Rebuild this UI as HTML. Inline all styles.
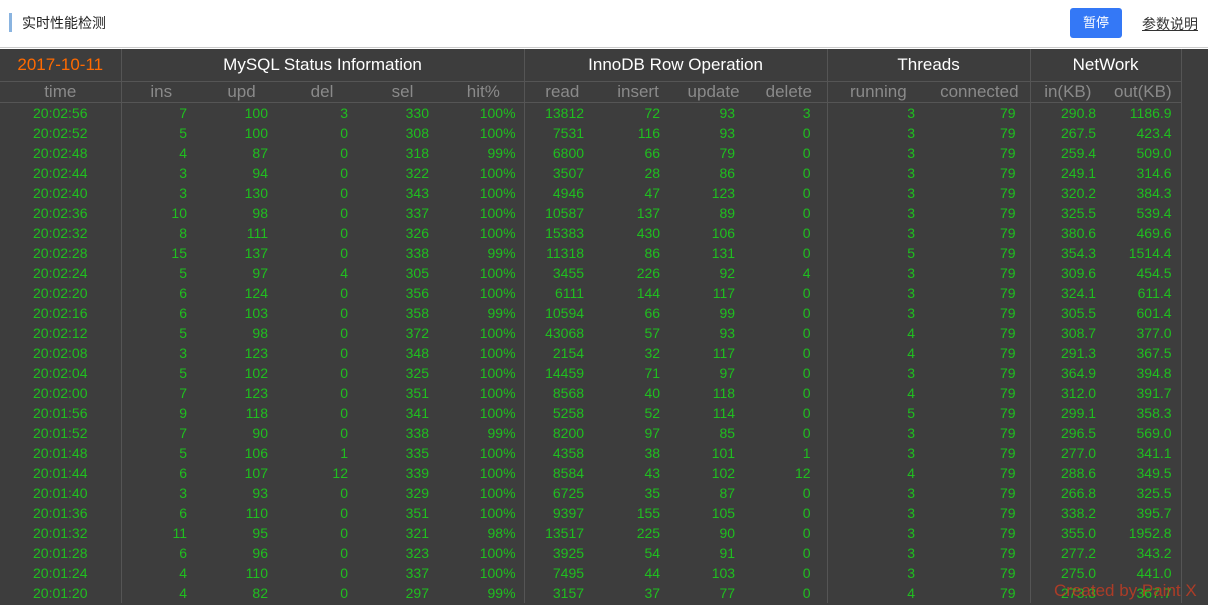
<!DOCTYPE html>
<html><head><meta charset="utf-8"><style>
*{margin:0;padding:0;box-sizing:border-box}
body{width:1208px;height:605px;overflow:hidden;background:#fff;font-family:"Liberation Sans","Noto Sans CJK SC",sans-serif;position:relative}
.top{height:48px;position:relative;border-bottom:1px solid #ccc}
.bar{position:absolute;left:9px;top:13px;width:3px;height:19px;background:#8ab4e0}
.title{position:absolute;left:22px;top:13px;font-size:14px;color:#222}
.btn{position:absolute;left:1070px;top:8px;width:52px;height:30px;background:#3478f6;border-radius:3px;color:#fff;font-size:13px;text-align:center;line-height:30px}
.lnk{position:absolute;left:1142px;top:14px;font-size:14px;color:#333;text-decoration:underline}
.wrap{position:absolute;left:0;top:49px;width:1208px;height:556px;background:#3d3d3d}
table{border-collapse:collapse;table-layout:fixed;width:1181px}
td,th{font-weight:normal;white-space:nowrap;overflow:hidden}
.h1 th{height:32px;font-size:17px;color:#fff;border-right:1px solid #555;border-bottom:1px solid #555}
.h2 th{height:21px;font-size:17px;color:#8a8a8a;border-bottom:1px solid #555;line-height:20px}
.h2 th.e,td.e{border-right:1px solid #555}
td{height:20px;font-size:14px;color:#1fbf1f;text-align:right;padding-right:14px;line-height:20px}
td.t{text-align:center;padding-right:0}
.ib td:nth-child(6){padding-right:8px}
.ib td:nth-child(n+7):nth-child(-n+10){padding-right:16px}
.ib td:nth-child(13),.ib td:nth-child(14){padding-right:9px}
.wm{position:absolute;left:1054px;top:581px;font-size:17px;color:rgba(220,60,30,.7)}
</style></head><body>
<div class="top"><div class="bar"></div><div class="title">实时性能检测</div><div class="btn">暂停</div><div class="lnk">参数说明</div></div>
<div class="wrap">
<table class="ib">
<colgroup><col style="width:121px"><col style="width:80px"><col style="width:81px"><col style="width:80px"><col style="width:81px"><col style="width:81px"><col style="width:76px"><col style="width:76px"><col style="width:75px"><col style="width:76px"><col style="width:102px"><col style="width:101px"><col style="width:75px"><col style="width:76px"></colgroup>
<tr class="h1"><th style="color:#ff6a00">2017-10-11</th><th colspan="5">MySQL Status Information</th><th colspan="4">InnoDB Row Operation</th><th colspan="2">Threads</th><th colspan="2">NetWork</th></tr>
<tr class="h2"><th class="e">time</th><th>ins</th><th>upd</th><th>del</th><th>sel</th><th class="e">hit%</th><th>read</th><th>insert</th><th>update</th><th class="e">delete</th><th>running</th><th class="e">connected</th><th>in(KB)</th><th class="e">out(KB)</th></tr>
<tr><td class="t e">20:02:56</td><td>7</td><td>100</td><td>3</td><td>330</td><td class="e">100%</td><td>13812</td><td>72</td><td>93</td><td class="e">3</td><td>3</td><td class="e">79</td><td>290.8</td><td class="e">1186.9</td></tr>
<tr><td class="t e">20:02:52</td><td>5</td><td>100</td><td>0</td><td>308</td><td class="e">100%</td><td>7531</td><td>116</td><td>93</td><td class="e">0</td><td>3</td><td class="e">79</td><td>267.5</td><td class="e">423.4</td></tr>
<tr><td class="t e">20:02:48</td><td>4</td><td>87</td><td>0</td><td>318</td><td class="e">99%</td><td>6800</td><td>66</td><td>79</td><td class="e">0</td><td>3</td><td class="e">79</td><td>259.4</td><td class="e">509.0</td></tr>
<tr><td class="t e">20:02:44</td><td>3</td><td>94</td><td>0</td><td>322</td><td class="e">100%</td><td>3507</td><td>28</td><td>86</td><td class="e">0</td><td>3</td><td class="e">79</td><td>249.1</td><td class="e">314.6</td></tr>
<tr><td class="t e">20:02:40</td><td>3</td><td>130</td><td>0</td><td>343</td><td class="e">100%</td><td>4946</td><td>47</td><td>123</td><td class="e">0</td><td>3</td><td class="e">79</td><td>320.2</td><td class="e">384.3</td></tr>
<tr><td class="t e">20:02:36</td><td>10</td><td>98</td><td>0</td><td>337</td><td class="e">100%</td><td>10587</td><td>137</td><td>89</td><td class="e">0</td><td>3</td><td class="e">79</td><td>325.5</td><td class="e">539.4</td></tr>
<tr><td class="t e">20:02:32</td><td>8</td><td>111</td><td>0</td><td>326</td><td class="e">100%</td><td>15383</td><td>430</td><td>106</td><td class="e">0</td><td>3</td><td class="e">79</td><td>380.6</td><td class="e">469.6</td></tr>
<tr><td class="t e">20:02:28</td><td>15</td><td>137</td><td>0</td><td>338</td><td class="e">99%</td><td>11318</td><td>86</td><td>131</td><td class="e">0</td><td>5</td><td class="e">79</td><td>354.3</td><td class="e">1514.4</td></tr>
<tr><td class="t e">20:02:24</td><td>5</td><td>97</td><td>4</td><td>305</td><td class="e">100%</td><td>3455</td><td>226</td><td>92</td><td class="e">4</td><td>3</td><td class="e">79</td><td>309.6</td><td class="e">454.5</td></tr>
<tr><td class="t e">20:02:20</td><td>6</td><td>124</td><td>0</td><td>356</td><td class="e">100%</td><td>6111</td><td>144</td><td>117</td><td class="e">0</td><td>3</td><td class="e">79</td><td>324.1</td><td class="e">611.4</td></tr>
<tr><td class="t e">20:02:16</td><td>6</td><td>103</td><td>0</td><td>358</td><td class="e">99%</td><td>10594</td><td>66</td><td>99</td><td class="e">0</td><td>3</td><td class="e">79</td><td>305.5</td><td class="e">601.4</td></tr>
<tr><td class="t e">20:02:12</td><td>5</td><td>98</td><td>0</td><td>372</td><td class="e">100%</td><td>43068</td><td>57</td><td>93</td><td class="e">0</td><td>4</td><td class="e">79</td><td>308.7</td><td class="e">377.0</td></tr>
<tr><td class="t e">20:02:08</td><td>3</td><td>123</td><td>0</td><td>348</td><td class="e">100%</td><td>2154</td><td>32</td><td>117</td><td class="e">0</td><td>4</td><td class="e">79</td><td>291.3</td><td class="e">367.5</td></tr>
<tr><td class="t e">20:02:04</td><td>5</td><td>102</td><td>0</td><td>325</td><td class="e">100%</td><td>14459</td><td>71</td><td>97</td><td class="e">0</td><td>3</td><td class="e">79</td><td>364.9</td><td class="e">394.8</td></tr>
<tr><td class="t e">20:02:00</td><td>7</td><td>123</td><td>0</td><td>351</td><td class="e">100%</td><td>8568</td><td>40</td><td>118</td><td class="e">0</td><td>4</td><td class="e">79</td><td>312.0</td><td class="e">391.7</td></tr>
<tr><td class="t e">20:01:56</td><td>9</td><td>118</td><td>0</td><td>341</td><td class="e">100%</td><td>5258</td><td>52</td><td>114</td><td class="e">0</td><td>5</td><td class="e">79</td><td>299.1</td><td class="e">358.3</td></tr>
<tr><td class="t e">20:01:52</td><td>7</td><td>90</td><td>0</td><td>338</td><td class="e">99%</td><td>8200</td><td>97</td><td>85</td><td class="e">0</td><td>3</td><td class="e">79</td><td>296.5</td><td class="e">569.0</td></tr>
<tr><td class="t e">20:01:48</td><td>5</td><td>106</td><td>1</td><td>335</td><td class="e">100%</td><td>4358</td><td>38</td><td>101</td><td class="e">1</td><td>3</td><td class="e">79</td><td>277.0</td><td class="e">341.1</td></tr>
<tr><td class="t e">20:01:44</td><td>6</td><td>107</td><td>12</td><td>339</td><td class="e">100%</td><td>8584</td><td>43</td><td>102</td><td class="e">12</td><td>4</td><td class="e">79</td><td>288.6</td><td class="e">349.5</td></tr>
<tr><td class="t e">20:01:40</td><td>3</td><td>93</td><td>0</td><td>329</td><td class="e">100%</td><td>6725</td><td>35</td><td>87</td><td class="e">0</td><td>3</td><td class="e">79</td><td>266.8</td><td class="e">325.5</td></tr>
<tr><td class="t e">20:01:36</td><td>6</td><td>110</td><td>0</td><td>351</td><td class="e">100%</td><td>9397</td><td>155</td><td>105</td><td class="e">0</td><td>3</td><td class="e">79</td><td>338.2</td><td class="e">395.7</td></tr>
<tr><td class="t e">20:01:32</td><td>11</td><td>95</td><td>0</td><td>321</td><td class="e">98%</td><td>13517</td><td>225</td><td>90</td><td class="e">0</td><td>3</td><td class="e">79</td><td>355.0</td><td class="e">1952.8</td></tr>
<tr><td class="t e">20:01:28</td><td>6</td><td>96</td><td>0</td><td>323</td><td class="e">100%</td><td>3925</td><td>54</td><td>91</td><td class="e">0</td><td>3</td><td class="e">79</td><td>277.2</td><td class="e">343.2</td></tr>
<tr><td class="t e">20:01:24</td><td>4</td><td>110</td><td>0</td><td>337</td><td class="e">100%</td><td>7495</td><td>44</td><td>103</td><td class="e">0</td><td>3</td><td class="e">79</td><td>275.0</td><td class="e">441.0</td></tr>
<tr><td class="t e">20:01:20</td><td>4</td><td>82</td><td>0</td><td>297</td><td class="e">99%</td><td>3157</td><td>37</td><td>77</td><td class="e">0</td><td>4</td><td class="e">79</td><td>273.3</td><td class="e">367.7</td></tr>
</table>
</div>
<div class="wm">Created by Paint X</div>
</body></html>
